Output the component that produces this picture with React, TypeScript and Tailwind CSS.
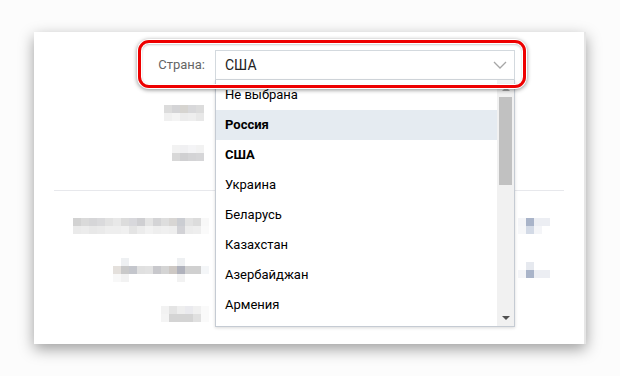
import React from 'react';

// blurred placeholder rows, drawn as rows of 8px cells
const Pixels = ({ rows }: { rows: string[][] }) => (
  <div className="flex flex-col">
    {rows.map((row, i) => (
      <div key={i} className="flex h-[8px]">
        {row.map((c, j) => (
          <div key={j} className="w-[8px] h-[8px]" style={{ background: c }} />
        ))}
      </div>
    ))}
  </div>
);

const countries = ['Не выбрана', 'Россия', 'США', 'Украина', 'Беларусь', 'Казахстан', 'Азербайджан', 'Армения'];

export default function App() {
  return (
    <div className="w-[620px] h-[376px] bg-[#fcfcfc] pt-[32px] pl-[34px] overflow-hidden" style={{ fontFamily: 'Roboto, "Liberation Sans", sans-serif' }}>
      <div className="relative w-[552px] h-[312px] bg-white border-r-2 border-[#e6e6e6] shadow-[0_5px_14px_rgba(0,0,0,0.38)] pt-[18px]">
        {/* country row */}
        <div className="flex items-center h-[30px]">
          <div className="w-[171px] text-right text-[13px] text-[#656565]">Страна:</div>
          <div className="relative ml-[10px] w-[300px] h-[30px]">
            <div className="h-full border border-[#d3d9de] flex items-center justify-between pl-[9px] pr-[7px] text-[14px] text-[#222]">
              <span>США</span>
              <svg width="14" height="8" viewBox="0 0 14 8" fill="none">
                <path d="M1 1l6 6 6-6" stroke="#a6a6a6" strokeWidth="1.3" />
              </svg>
            </div>

            {/* open dropdown */}
            <div className="absolute left-0 top-[30px] z-10 w-[300px] h-[247px] bg-white border border-t-0 border-[#c5cbd3] shadow-[0_1px_3px_rgba(0,0,0,0.15)] flex overflow-hidden">
              <div className="flex-1 flex flex-col">
                {countries.map((c, i) => (
                  <div
                    key={c}
                    className={`h-[30px] shrink-0 flex items-center pl-[9px] text-[13px] text-black ${i === 1 ? 'bg-[#e5ebf1]' : ''} ${i === 1 || i === 2 ? 'font-bold' : ''}`}
                  >
                    {c}
                  </div>
                ))}
              </div>
              <div className="w-[17px] bg-[#f1f1f1] flex flex-col items-center">
                <div className="h-[17px] flex items-center justify-center">
                  <div className="w-0 h-0 border-l-[4px] border-r-[4px] border-b-[4px] border-l-transparent border-r-transparent border-b-[#a3a3a3]" />
                </div>
                <div className="w-[13px] h-[88px] bg-[#c1c1c1]" />
                <div className="flex-1" />
                <div className="h-[17px] flex items-center justify-center">
                  <div className="w-0 h-0 border-l-[4px] border-r-[4px] border-t-[4px] border-l-transparent border-r-transparent border-t-[#505050]" />
                </div>
              </div>
            </div>
          </div>
        </div>

        {/* blurred rows, top block */}
        <div className="flex justify-end w-[170px] mt-[25px]">
          <Pixels rows={[
            ['#dcdcdc', '#d4d4d6', '#d6d4d0', '#d8d8da', '#dcdcdc'],
            ['#f0f0f0', '#f4f4f4', '#ececec', '#eeeeee', '#e8e8e8'],
          ]} />
        </div>
        <div className="flex justify-end w-[170px] mt-[24px]">
          <Pixels rows={[
            ['#f2f2f2', '#f0f0f2', '#f4f4f6', '#f2f2f2'],
            ['#d8d8d8', '#d0d0d2', '#d4d4d6', '#d6d6d8'],
          ]} />
        </div>

        <div className="mx-[20px] mt-[29px] h-[1px] bg-[#e7e8ec]" />

        {/* blurred rows, bottom block */}
        <div className="flex items-center mt-[27px]">
          <div className="flex justify-end w-[175px]">
            <Pixels rows={[
              ['#d2d2d2', '#dadada', '#d6d6d8', '#dadadc', '#e2e2e2', '#e8e8e8', '#dcdcdc', '#d8d8dc', '#cfcfd2', '#e4e4e4', '#d4d4d6', '#dedede', '#d8d6d4', '#cbcdd2', '#e2e2e2', '#dcdcdc', '#f8f8f8'],
              ['#eaeaea', '#ececec', '#e8e8e8', '#eaeaea', '#eeeeee', '#eeeeee', '#f0f0f0', '#e4e4e4', '#ececec', '#f2f2f2', '#eeeeee', '#f0f0f0', '#eeeeee', '#d2d2d6', '#ececec', '#eeeeee', '#fafafa'],
            ]} />
          </div>
          <div className="ml-[309px]">
            <Pixels rows={[
              ['#f4f5f8', '#a9b4c9', '#eceef3', '#eceef3'],
              ['#f6f7f9', '#d3dae6', '#f4f5f8', '#ffffff'],
            ]} />
          </div>
        </div>
        <div className="flex items-center mt-[24px]">
          <div className="flex justify-end w-[175px]">
            <Pixels rows={[
              ['#ffffff', '#eef0f2', '#ffffff', '#ffffff', '#ffffff', '#ffffff', '#ffffff', '#ffffff', '#eef0f2', '#ffffff', '#ffffff', '#ffffff'],
              ['#e4e0dc', '#c9c9c9', '#c4c6cc', '#e0e0e0', '#e2e2e2', '#c8c8cc', '#d4d4d4', '#cdc8c4', '#b0b2bc', '#d0d0d0', '#d0d0d0', '#f4f6f8'],
              ['#f8f8f8', '#f2f2f2', '#ffffff', '#ffffff', '#ffffff', '#ffffff', '#ffffff', '#ffffff', '#f2f2f2', '#ffffff', '#ffffff', '#ffffff'],
            ]} />
          </div>
          <div className="ml-[309px]">
            <Pixels rows={[
              ['#ffffff', '#e6e9ef', '#ffffff', '#ffffff'],
              ['#f4f5f8', '#a9b4c9', '#eceef3', '#eceef3'],
            ]} />
          </div>
        </div>
        <div className="flex justify-end w-[175px] mt-[24px]">
          <Pixels rows={[
            ['#f2f2f2', '#e4e4e4', '#eeeeee', '#eaeaee', '#f0f0f0', '#fafafa'],
            ['#f4f4f4', '#d4d4d4', '#d4d4d4', '#d4d4d4', '#e0e0e0', '#fafafa'],
          ]} />
        </div>

        {/* red highlight around the country field */}
        <div className="absolute left-[104px] top-[8px] w-[388px] h-[48px] z-20 rounded-[11px] border-[3px] border-[#ee0000] shadow-[0_0_0_1px_#ffffff,0_1px_4px_1px_rgba(0,0,0,0.45),inset_0_0_0_1px_#ffffff,inset_0_1px_3px_rgba(0,0,0,0.4)]" />
      </div>
    </div>
  );
}
